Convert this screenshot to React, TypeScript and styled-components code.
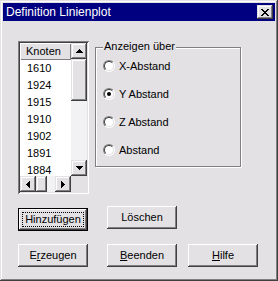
import React from 'react';
import styled, { createGlobalStyle } from 'styled-components';

const FACE = '#E3E1E4';
const SHADOW = '#808080';
const DARK = '#404040';
const TRACK = '#F2F1F3';
const FONT = '"Liberation Sans", Arial, sans-serif';

const Global = createGlobalStyle`
  html, body { margin: 0; padding: 0; background: ${FACE}; }
  body { font-family: ${FONT}; font-size: 11px; color: #000; }
`;

const Window = styled.div`
  box-sizing: border-box;
  width: 278px;
  height: 281px;
  padding: 3px;
  background: ${FACE};
  box-shadow: inset -1px -1px ${DARK}, inset 1px 1px ${FACE}, inset -2px -2px ${SHADOW},
    inset 2px 2px #fff;
  display: flex;
  flex-direction: column;
`;

const TitleBar = styled.div`
  height: 18px;
  background: #000080;
  display: flex;
  align-items: center;
  padding: 0 2px 0 3px;
`;

const TitleText = styled.span`
  flex: 1;
  color: #fff;
  font-size: 12px;
  line-height: 18px;
  white-space: nowrap;
`;

const Raised = `
  box-shadow: inset -1px -1px ${DARK}, inset 1px 1px ${FACE}, inset -2px -2px ${SHADOW},
    inset 2px 2px #fff;
`;

const CloseBtn = styled.div`
  width: 16px;
  height: 14px;
  background: ${FACE};
  ${Raised}
  display: flex;
  align-items: center;
  justify-content: center;
`;

const Body = styled.div`
  flex: 1;
  padding-left: 15px;
  display: flex;
  flex-direction: column;
`;

const TopRow = styled.div`
  display: flex;
  align-items: flex-start;
  margin-top: 20px;
`;

const ListBox = styled.div`
  box-sizing: border-box;
  width: 71px;
  height: 153px;
  padding: 2px;
  background: ${FACE};
  box-shadow: inset 1px 1px ${SHADOW}, inset -1px -1px #fff, inset 2px 2px ${DARK},
    inset -2px -2px ${FACE};
  display: grid;
  grid-template-columns: 1fr 16px;
  grid-template-rows: 1fr 16px;
`;

const ListMain = styled.div`
  display: flex;
  flex-direction: column;
  overflow: hidden;
`;

const Header = styled.div`
  height: 17px;
  flex: none;
  box-sizing: border-box;
  padding-left: 6px;
  line-height: 17px;
  background: ${FACE};
  box-shadow: inset 1px 1px #fff, inset -1px -1px ${SHADOW};
`;

const Items = styled.div`
  flex: 1;
  background: #fff;
  overflow: hidden;
`;

const Item = styled.div`
  height: 17px;
  line-height: 17px;
  padding-left: 7px;
`;

const VScroll = styled.div`
  display: flex;
  flex-direction: column;
  background: ${TRACK};
`;

const HScroll = styled.div`
  display: flex;
  background: ${TRACK};
`;

const ScrollBtn = styled.div`
  width: 16px;
  height: 16px;
  flex: none;
  background: ${FACE};
  ${Raised}
  display: flex;
  align-items: center;
  justify-content: center;
`;

const Thumb = styled.div<{ $w: number; $h: number }>`
  width: ${(p) => p.$w}px;
  height: ${(p) => p.$h}px;
  flex: none;
  background: ${FACE};
  ${Raised}
`;

const Spacer = styled.div`
  flex: 1;
`;

const Corner = styled.div`
  background: ${FACE};
`;

const Group = styled.div`
  position: relative;
  box-sizing: border-box;
  width: 146px;
  height: 120px;
  margin: 6px 0 0 6px;
  border: 1px solid ${SHADOW};
  box-shadow: inset 1px 1px #fff, 1px 1px #fff;
  padding: 11px 0 0 7px;
  display: flex;
  flex-direction: column;
  gap: 14px;
`;

const Legend = styled.span`
  position: absolute;
  top: -8px;
  left: 7px;
  padding: 0 1px;
  background: ${FACE};
  line-height: 13px;
`;

const RadioRow = styled.div`
  display: flex;
  align-items: center;
  height: 14px;
  gap: 4px;
`;

const RadioOuter = styled.div`
  box-sizing: border-box;
  width: 12px;
  height: 12px;
  border-radius: 50%;
  border: 1px solid;
  border-color: ${SHADOW} #fff #fff ${SHADOW};
  transform: rotate(0deg);
`;

const RadioInner = styled.div`
  box-sizing: border-box;
  width: 10px;
  height: 10px;
  border-radius: 50%;
  border: 1px solid;
  border-color: ${DARK} ${FACE} ${FACE} ${DARK};
  background: #fff;
  display: flex;
  align-items: center;
  justify-content: center;
`;

const Dot = styled.div`
  width: 4px;
  height: 4px;
  border-radius: 50%;
  background: #000;
`;

const BtnRow = styled.div<{ $mt: number }>`
  display: flex;
  align-items: flex-start;
  margin-top: ${(p) => p.$mt}px;
  height: 25px;
`;

const Btn = styled.div<{ $default?: boolean; $ml?: number; $mt?: number }>`
  box-sizing: border-box;
  width: 70px;
  height: 23px;
  flex: none;
  margin: ${(p) => p.$mt ?? 0}px 0 0 ${(p) => p.$ml ?? 0}px;
  background: ${FACE};
  border: ${(p) => (p.$default ? '1px solid #000' : 'none')};
  box-shadow: inset -1px -1px ${DARK}, inset 1px 1px #fff, inset -2px -2px ${SHADOW},
    inset 2px 2px ${FACE};
  display: flex;
  align-items: center;
  justify-content: center;
  line-height: 13px;
`;

const Focus = styled.span`
  flex: 1;
  align-self: stretch;
  margin: 3px;
  border: 1px dotted #000;
  display: flex;
  align-items: center;
  justify-content: center;
`;

const Px = ({ rects, w, h }: { rects: [number, number, number, number][]; w: number; h: number }) => (
  <svg width={w} height={h} viewBox={`0 0 ${w} ${h}`} shapeRendering="crispEdges">
    {rects.map(([x, y, rw, rh], i) => (
      <rect key={i} x={x} y={y} width={rw} height={rh} fill="#000" />
    ))}
  </svg>
);

const UpArrow = () => (
  <Px w={7} h={4} rects={[[3, 0, 1, 1], [2, 1, 3, 1], [1, 2, 5, 1], [0, 3, 7, 1]]} />
);
const DownArrow = () => (
  <Px w={7} h={4} rects={[[0, 0, 7, 1], [1, 1, 5, 1], [2, 2, 3, 1], [3, 3, 1, 1]]} />
);
const LeftArrow = () => (
  <Px w={4} h={7} rects={[[0, 3, 1, 1], [1, 2, 1, 3], [2, 1, 1, 5], [3, 0, 1, 7]]} />
);
const RightArrow = () => (
  <Px w={4} h={7} rects={[[0, 0, 1, 7], [1, 1, 1, 5], [2, 2, 1, 3], [3, 3, 1, 1]]} />
);
const CloseGlyph = () => (
  <Px
    w={8}
    h={7}
    rects={[
      [0, 0, 2, 1], [6, 0, 2, 1],
      [1, 1, 2, 1], [5, 1, 2, 1],
      [2, 2, 4, 1],
      [3, 3, 2, 1],
      [2, 4, 4, 1],
      [1, 5, 2, 1], [5, 5, 2, 1],
      [0, 6, 2, 1], [6, 6, 2, 1],
    ]}
  />
);

const Radio = ({ label, checked }: { label: string; checked?: boolean }) => (
  <RadioRow>
    <RadioOuter>
      <RadioInner>{checked && <Dot />}</RadioInner>
    </RadioOuter>
    <span>{label}</span>
  </RadioRow>
);

const knoten = ['1610', '1924', '1915', '1910', '1902', '1891', '1884'];

export default function App() {
  return (
    <>
      <Global />
      <Window>
        <TitleBar>
          <TitleText>Definition Linienplot</TitleText>
          <CloseBtn>
            <CloseGlyph />
          </CloseBtn>
        </TitleBar>
        <Body>
          <TopRow>
            <ListBox>
              <ListMain>
                <Header>Knoten</Header>
                <Items>
                  {knoten.map((k) => (
                    <Item key={k}>{k}</Item>
                  ))}
                </Items>
              </ListMain>
              <VScroll>
                <ScrollBtn>
                  <UpArrow />
                </ScrollBtn>
                <Thumb $w={16} $h={42} />
                <Spacer />
                <ScrollBtn>
                  <DownArrow />
                </ScrollBtn>
              </VScroll>
              <HScroll>
                <ScrollBtn>
                  <LeftArrow />
                </ScrollBtn>
                <Thumb $w={11} $h={16} />
                <Spacer />
                <ScrollBtn>
                  <RightArrow />
                </ScrollBtn>
              </HScroll>
              <Corner />
            </ListBox>
            <Group>
              <Legend>Anzeigen über</Legend>
              <Radio label="X-Abstand" />
              <Radio label="Y Abstand" checked />
              <Radio label="Z Abstand" />
              <Radio label="Abstand" />
            </Group>
          </TopRow>
          <BtnRow $mt={12}>
            <Btn $default $mt={2}>
              <Focus>Hinzufügen</Focus>
            </Btn>
            <Btn $ml={19}>Löschen</Btn>
          </BtnRow>
          <BtnRow $mt={13}>
            <Btn>
              <span>
                E<u>r</u>zeugen
              </span>
            </Btn>
            <Btn $ml={19}>
              <span>
                <u>B</u>eenden
              </span>
            </Btn>
            <Btn $ml={11}>
              <span>
                <u>H</u>ilfe
              </span>
            </Btn>
          </BtnRow>
        </Body>
      </Window>
    </>
  );
}
